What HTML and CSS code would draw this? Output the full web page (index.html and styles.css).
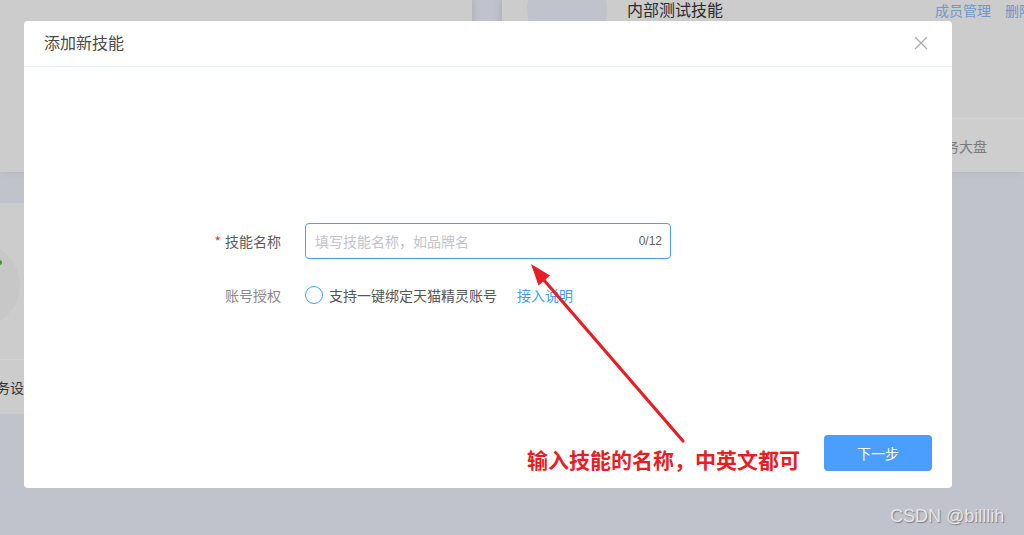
FILE: index.html
```html
<!DOCTYPE html>
<html lang="zh-CN">
<head>
<meta charset="utf-8">
<title>添加新技能</title>
<link rel="stylesheet" href="styles.css">
</head>
<body>
<div class="page">
  <div class="row row-top">
    <div class="card card-a"></div>
    <div class="card card-b">
      <div class="card-main">
        <div class="avatar"></div>
        <div class="card-title">内部测试技能</div>
        <div class="card-links"><span>成员管理</span><span>删除</span></div>
      </div>
      <div class="card-foot"><span>服务大盘</span></div>
    </div>
  </div>
  <div class="row row-second">
    <div class="card card-c">
      <div class="card-c-main">
        <div class="avatar2"><span class="dot"></span></div>
      </div>
      <div class="card-c-foot"><span>业务设置</span></div>
    </div>
  </div>
</div>

<div class="dialog">
  <div class="dialog-header">
    <span class="dialog-title">添加新技能</span>
    <svg class="close" width="14" height="14" viewBox="0 0 14 14"><path d="M1 1L13 13M13 1L1 13" stroke="#a9a9a9" stroke-width="1.2" fill="none"/></svg>
  </div>
  <div class="dialog-body">
    <div class="form-row">
      <label class="label"><span class="star">*</span>技能名称</label>
      <div class="input">
        <span class="placeholder">填写技能名称，如品牌名</span>
        <span class="count">0/12</span>
      </div>
    </div>
    <div class="form-row row2">
      <label class="label label-light">账号授权</label>
      <div class="radio-group">
        <span class="radio"></span>
        <span class="radio-text">支持一键绑定天猫精灵账号</span>
        <a class="link">接入说明</a>
      </div>
    </div>
  </div>
  <div class="dialog-footer">
    <button class="btn">下一步</button>
  </div>
</div>

<svg class="arrow" width="1024" height="535" viewBox="0 0 1024 535">
  <line x1="683" y1="441" x2="543" y2="279" stroke="#e81e25" stroke-width="3.2" stroke-linecap="round"/>
  <polygon points="531,264 538.5,285.5 550,275.5" fill="#e81e25"/>
</svg>
<div class="note">输入技能的名称，中英文都可</div>
<div class="watermark">CSDN @billlih</div>
</body>
</html>
```

FILE: styles.css
```css
html, body {
  margin: 0;
  padding: 0;
}
body {
  width: 1024px;
  height: 535px;
  overflow: hidden;
  background: #c0c3cb;
  font-family: "Noto Sans CJK SC", "Noto Sans", sans-serif;
  position: relative;
}
.page {
  display: flex;
  flex-direction: column;
  gap: 31px;
}
.row {
  display: flex;
}
.row-top {
  height: 172px;
  gap: 30px;
}
.card {
  background: #cccccc;
}
.card-a {
  width: 472px;
  box-shadow: 2px 0 6px rgba(120, 125, 140, 0.25);
}
.card-b {
  flex: 1;
  display: flex;
  flex-direction: column;
  box-shadow: -2px 0 6px rgba(120, 125, 140, 0.25);
}
.card-main {
  flex: 1;
  display: flex;
  align-items: flex-start;
  padding-left: 25px;
  position: relative;
  overflow: hidden;
}
.avatar {
  width: 80px;
  height: 80px;
  border-radius: 50%;
  background: #c0c3cb;
  margin-top: -30px;
  flex: none;
}
.card-title {
  margin-left: 20px;
  font-size: 16px;
  line-height: 20px;
  color: #2b2b2b;
  margin-top: -1px;
}
.card-links {
  margin-left: auto;
  display: flex;
  gap: 14px;
  margin-right: -9px;
  font-size: 14px;
  line-height: 20px;
  color: #7196c8;
}
.card-foot {
  height: 53px;
  border-top: 1px solid #d3d3d3;
  background: #cecece;
  display: flex;
  align-items: center;
  justify-content: flex-end;
  padding-right: 37px;
  font-size: 14px;
  color: #7a7a7a;
}
.row-second {
  height: 211px;
}
.card-c {
  width: 472px;
  display: flex;
  flex-direction: column;
}
.card-c-main {
  flex: 1;
  display: flex;
  align-items: flex-start;
  padding-top: 40px;
  overflow: hidden;
}
.avatar2 {
  width: 84px;
  height: 84px;
  border-radius: 50%;
  background: #c7c7c7;
  margin-left: -64px;
  position: relative;
  flex: none;
}
.dot {
  position: absolute;
  left: 61px;
  top: 17px;
  width: 5px;
  height: 5px;
  border-radius: 50%;
  background: #3b9a2a;
}
.card-c-foot {
  height: 54px;
  border-top: 1px solid #d2d2d2;
  display: flex;
  align-items: center;
  font-size: 14px;
  color: #333;
  margin-left: -18px;
}

/* dialog */
.dialog {
  position: absolute;
  left: 24px;
  top: 21px;
  width: 928px;
  height: 467px;
  background: #fff;
  border-radius: 4px;
  display: flex;
  flex-direction: column;
}
.dialog-header {
  height: 45px;
  border-bottom: 1px solid #e6edf3;
  display: flex;
  align-items: center;
  justify-content: space-between;
  padding: 0 24px 0 20px;
}
.dialog-title {
  font-size: 16px;
  color: #4a4a4a;
  line-height: 22px;
  margin-top: -3px;
}
.close {
  display: block;
  margin-top: -2px;
}
.dialog-body {
  padding-top: 156px;
  padding-left: 137px;
  display: flex;
  flex-direction: column;
  gap: 20px;
}
.form-row {
  display: flex;
  align-items: center;
}
.label {
  width: 144px;
  padding-right: 24px;
  box-sizing: border-box;
  text-align: right;
  font-size: 14px;
  color: #5c5c5c;
  line-height: 20px;
}
.label-light {
  color: #8a8a8a;
}
.star {
  color: #f0353d;
  margin-right: 4px;
}
.input {
  width: 366px;
  height: 36px;
  box-sizing: border-box;
  border: 1px solid #4a9ef8;
  border-radius: 4px;
  display: flex;
  align-items: center;
  justify-content: space-between;
  padding: 0 8px 0 9px;
}
.placeholder {
  font-size: 14px;
  color: #c0c4cc;
}
.count {
  font-family: "Liberation Sans", Arial, sans-serif;
  font-size: 12px;
  color: #606060;
}
.row2 {
  height: 36px;
  margin-top: -2px;
}
.radio-group {
  display: flex;
  align-items: center;
}
.radio {
  width: 18px;
  height: 18px;
  box-sizing: border-box;
  border: 1.5px solid #409eff;
  border-radius: 50%;
  margin-right: 6px;
}
.radio-text {
  font-size: 14px;
  color: #555;
}
.link {
  margin-left: 20px;
  font-size: 14px;
  color: #409eff;
}
.dialog-footer {
  margin-top: auto;
  display: flex;
  justify-content: flex-end;
  padding: 0 20px 17px 0;
}
.btn {
  width: 108px;
  height: 36px;
  border: none;
  border-radius: 4px;
  background: #4a9ffe;
  color: #fff;
  font-family: "Noto Sans CJK SC", sans-serif;
  font-size: 14px;
  padding: 0;
}

/* annotations */
.arrow {
  position: absolute;
  left: 0;
  top: 0;
  pointer-events: none;
}
.note {
  position: absolute;
  left: 527px;
  top: 444px;
  font-size: 21px;
  font-weight: 700;
  line-height: 30px;
  color: #e81e25;
  white-space: nowrap;
}
.watermark {
  position: absolute;
  left: 890px;
  top: 505px;
  font-family: "Liberation Sans", Arial, sans-serif;
  font-size: 18px;
  line-height: 22px;
  color: #e4e5e8;
  text-shadow: 1px 1px 1px #7d7f86;
}
```
